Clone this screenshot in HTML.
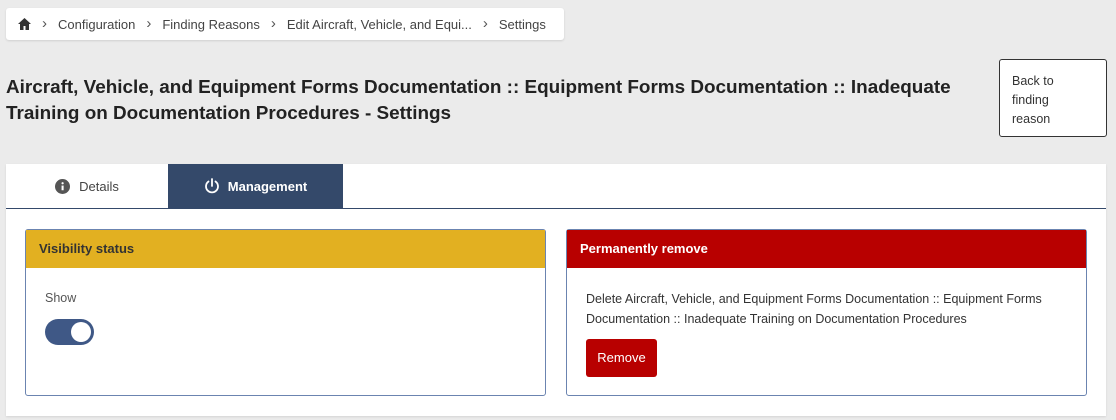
<!DOCTYPE html>
<html><head><style>
*{box-sizing:border-box;margin:0;padding:0}
body{width:1116px;height:420px;background:#ebebeb;font-family:"Liberation Sans",sans-serif;color:#333;position:relative;overflow:hidden;font-size:13px}
.bc{position:absolute;left:6px;top:8px;width:558px;height:32px;background:#fff;border-radius:3px;box-shadow:0 1px 2px rgba(0,0,0,.12);display:flex;align-items:center;padding-left:12px;font-size:13px;color:#444}
.bc .s{margin:0 11px 0 11px;color:#555;font-size:15px;line-height:13px;position:relative;top:-1px}
h1{position:absolute;left:6px;top:75px;width:975px;font-size:18.9px;font-weight:bold;line-height:26px;color:#222}
.back{position:absolute;left:999px;top:59px;width:108px;height:78px;border:1px solid #333;border-radius:3px;background:#fff;padding:12px 12px;font-size:12.5px;line-height:19px;color:#333}
.card{position:absolute;left:6px;top:164px;width:1100px;height:252px;background:#fff;box-shadow:0 1px 2px rgba(0,0,0,.1)}
.tabs{height:45px;border-bottom:1px solid #34496a;position:relative}
.t1{position:absolute;left:0;top:0;width:162px;height:44px;display:flex;align-items:center;justify-content:center;color:#444}
.t2{position:absolute;left:162px;top:0;width:175px;height:44px;background:#34496a;color:#fff;font-weight:bold;display:flex;align-items:center;justify-content:center}
.p{position:absolute;top:65px;height:167px;border:1px solid #6b84b0;border-radius:3px;background:#fff}
.ph{height:38px;padding-left:13px;line-height:38px;font-weight:bold;font-size:13px}
</style></head><body>
<div class="bc">
<svg width="13" height="12" viewBox="0 0 13 12"><path d="M6.5 0L0 6h2v6h3.5V8h2v4H11V6h2z" fill="#333"/></svg>
<span class="s">›</span>Configuration<span class="s">›</span>Finding Reasons<span class="s">›</span>Edit Aircraft, Vehicle, and Equi...<span class="s">›</span>Settings
</div>
<h1>Aircraft, Vehicle, and Equipment Forms Documentation :: Equipment Forms Documentation :: Inadequate Training on Documentation Procedures - Settings</h1>
<div class="back">Back to<br>finding<br>reason</div>
<div class="card">
<div class="tabs">
<div class="t1"><svg width="15" height="15" viewBox="0 0 16 16" style="margin-right:9px"><circle cx="8" cy="8" r="8" fill="#555"/><rect x="7" y="7" width="2.2" height="5" fill="#fff"/><circle cx="8.1" cy="4.5" r="1.2" fill="#fff"/></svg>Details</div>
<div class="t2"><svg width="16" height="16" viewBox="0 0 16 16" style="margin-right:8px"><path d="M4.5 3.5A6 6 0 1 0 11.5 3.5" fill="none" stroke="#fff" stroke-width="1.8" stroke-linecap="round"/><line x1="8" y1="1" x2="8" y2="8" stroke="#fff" stroke-width="1.8" stroke-linecap="round"/></svg>Management</div>
</div>
<div class="p" style="left:19px;width:521px">
<div class="ph" style="background:#e2b021;color:#333">Visibility status</div>
<div style="padding:23px 0 0 19px;color:#555;font-size:12.5px">Show</div>
<div style="margin:14px 0 0 19px;width:49px;height:26px;border-radius:13px;background:#3f5886;position:relative"><div style="position:absolute;right:3px;top:3px;width:20px;height:20px;border-radius:50%;background:#fff"></div></div>
</div>
<div class="p" style="left:560px;width:521px">
<div class="ph" style="background:#b80000;color:#fff">Permanently remove</div>
<div style="padding:21px 19px 0 19px;font-size:12.5px;line-height:20px;color:#333">Delete Aircraft, Vehicle, and Equipment Forms Documentation :: Equipment Forms Documentation :: Inadequate Training on Documentation Procedures</div>
<div style="margin:10px 0 0 19px;width:71px;height:38px;background:#b80000;border-radius:3px;color:#fff;line-height:38px;text-align:center;font-size:13px">Remove</div>
</div>
</div>
</body></html>
